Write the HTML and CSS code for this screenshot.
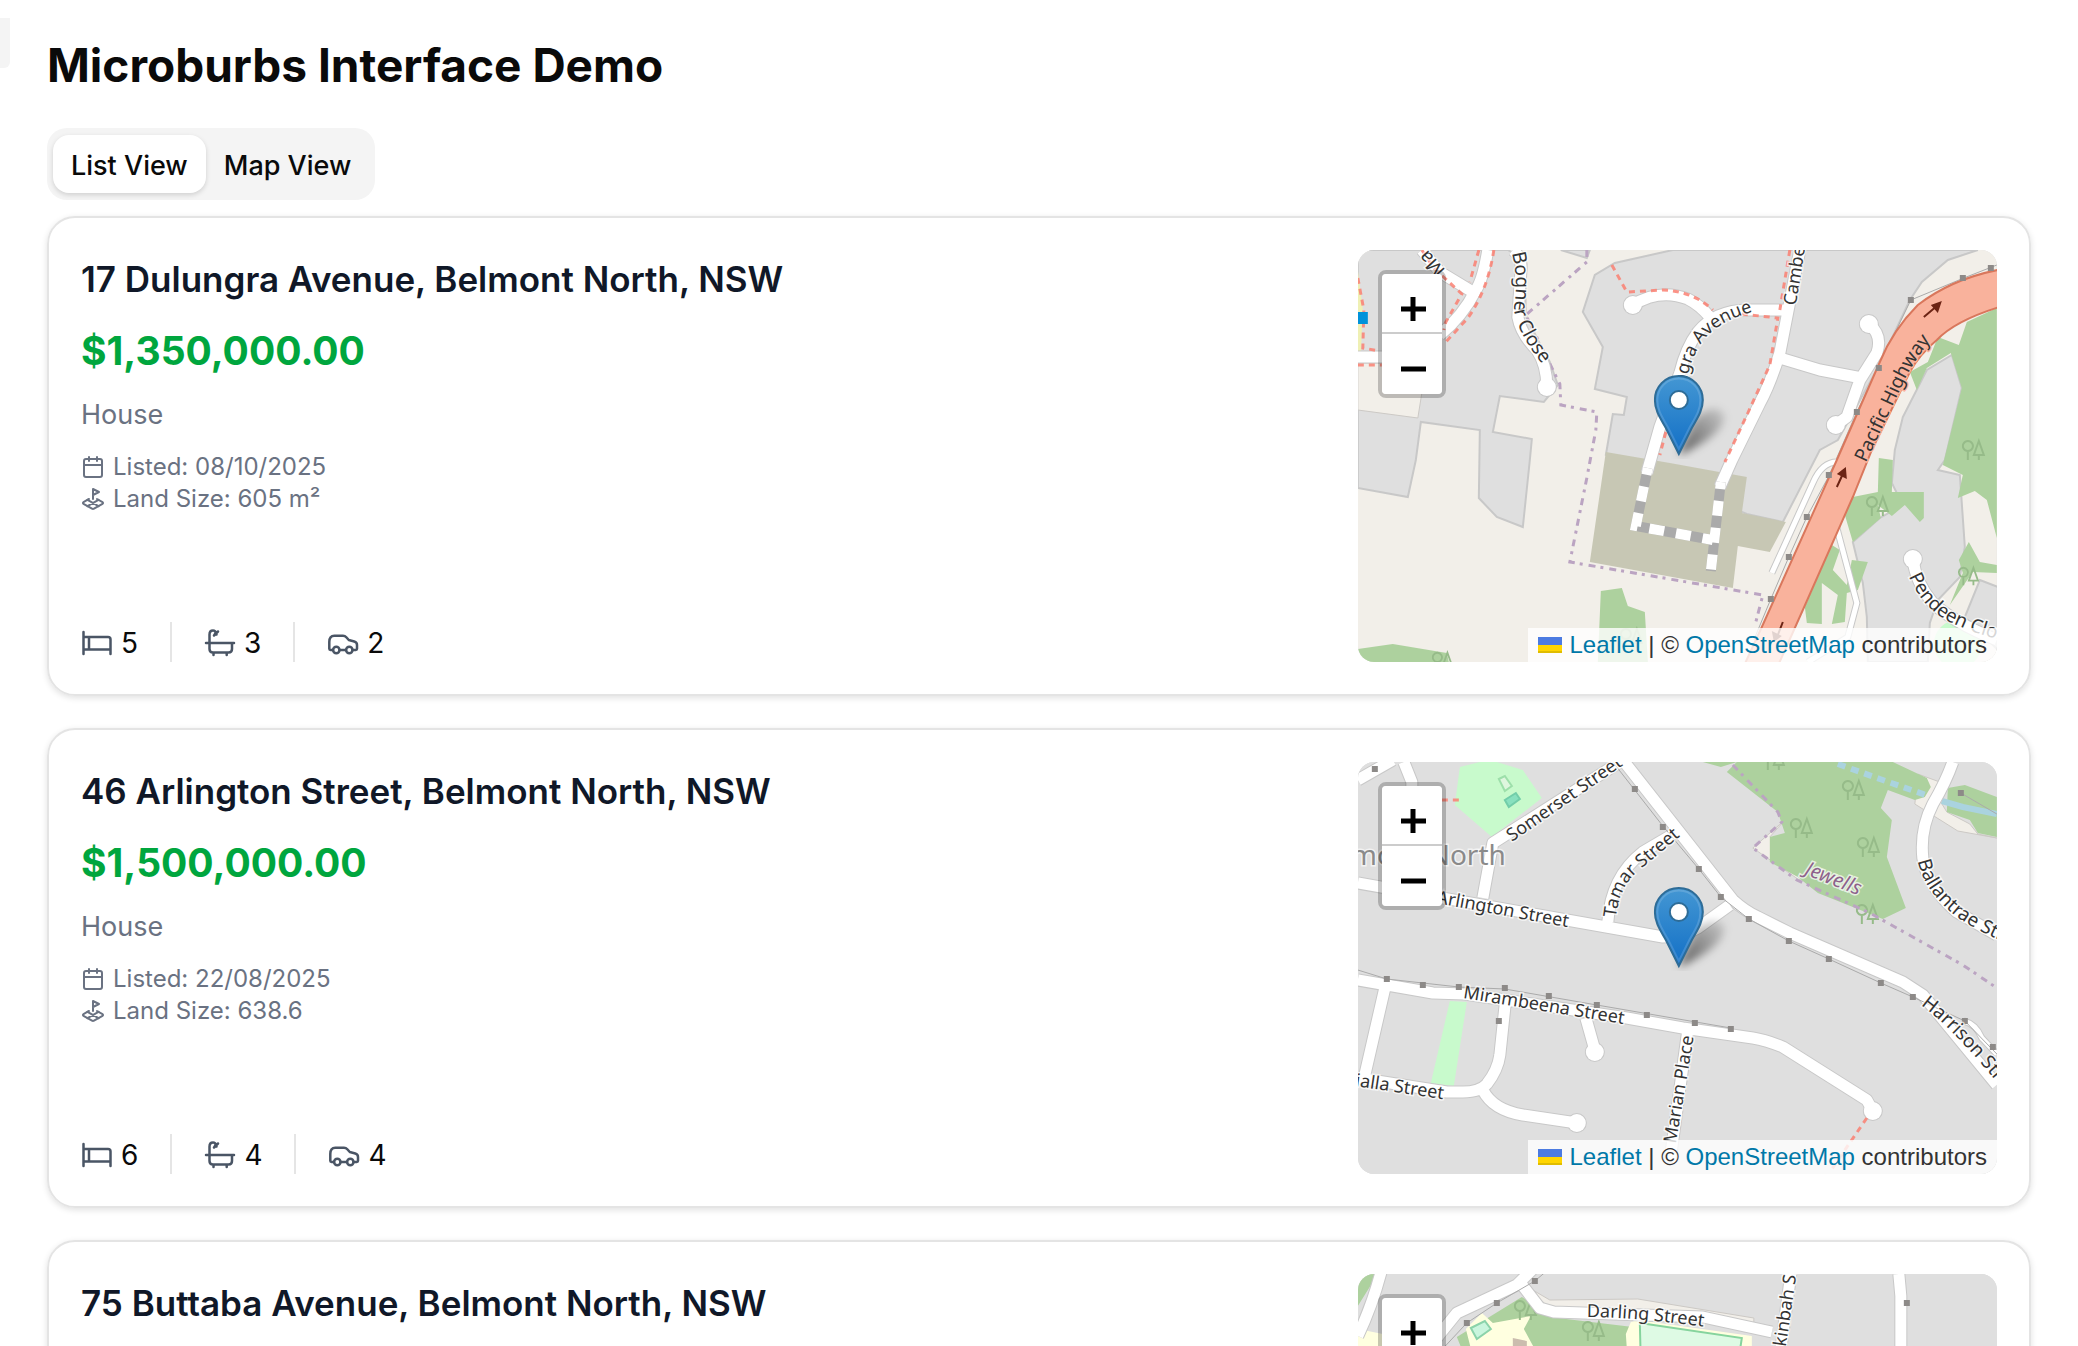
FILE: index.html
```html
<!DOCTYPE html>
<html lang="en">
<head>
<meta charset="utf-8">
<meta name="viewport" content="width=device-width, initial-scale=1">
<title>Microburbs Interface Demo</title>
<link rel="stylesheet" href="styles.css">
</head>
<body>
<svg class="sprite" aria-hidden="true">
  <symbol id="calendar" viewBox="0 0 24 24"><path d="M8 2v4M16 2v4M3 10h18"/><rect x="3" y="4" width="18" height="18" rx="2"/></symbol>
  <symbol id="land" viewBox="0 0 24 24"><path d="m12 8 6-3-6-3v10"/><path d="m8 11.99-5.5 3.14a1 1 0 0 0 0 1.74l8.5 4.86a2 2 0 0 0 2 0l8.5-4.86a1 1 0 0 0 0-1.74L16 12"/><path d="m6.49 12.85 11.02 6.3M17.51 12.85 6.5 19.15"/></symbol>
  <symbol id="bed" viewBox="0 0 32 32"><path d="M2.5 5v22M2.5 10H27q2.500 0 2.500 2.500V27M2.500 22.500h27M8 10v12.500"/></symbol>
  <symbol id="bath" viewBox="0 0 32 32"><path d="M2 16h28M5.500 16V7.500Q5.500 3.500 9 3.500q2.500 0 3 2.500M10 8.500l4-4M11 6.500l1.500 1M5.500 16v6q0 3.500 3.500 3.500h15.500q3.500 0 3.500-3.500v-6M9.500 25.500V28M22.700 25.500V28"/></symbol>
  <symbol id="car" viewBox="0 0 32 32"><path d="M6 23H3.500q-1.200 0-1.200-1.200V15q0-6.300 5-6.300H16q2 0 3.300 1.500l2.500 2.800 5.500 1.500q2.700.8 2.700 3.500v3.800q0 1.200-1.200 1.200H25.500M12.500 23H19"/><circle cx="9.300" cy="23" r="3.200"/><circle cx="22.300" cy="23" r="3.200"/></symbol>
  <symbol id="plus" viewBox="0 0 60 60"><path d="M19 35h25M31 23v24"/></symbol>
  <symbol id="minus" viewBox="0 0 60 60"><path d="M19 35h25"/></symbol>
  <symbol id="trees" viewBox="0 0 24 24"><path d="M6 22V12M6 13a5 5 0 1 1 .1 0M17 22v-5M17 3l-5 14h10z"/></symbol>
  <linearGradient id="pin-fill" x1="0" y1="0" x2="0" y2="1"><stop offset="0" stop-color="#4497d3"/><stop offset="1" stop-color="#126fc6"/></linearGradient>
  <linearGradient id="shade" x1="0" y1="1" x2="1" y2="0"><stop offset="0" stop-opacity=".6"/><stop offset="1" stop-opacity=".1"/></linearGradient>
  <filter id="soft" x="-40%" y="-40%" width="180%" height="180%"><feGaussianBlur stdDeviation="4"/></filter>
  <symbol id="pin" viewBox="0 0 96 84">
    <path d="M25 79 40 45Q60 26 70 39Q74 57 28 79z" fill="url(#shade)" filter="url(#soft)"/>
    <path d="M25 1C11 1 1 12 1 25C1 36 7 44 12 53L25 79L38 53C43 44 49 36 49 25C49 12 39 1 25 1z" fill="url(#pin-fill)" stroke="#2e6c97" stroke-width="2"/>
    <path d="M25 3.500C12 3.500 3.500 14 3.500 25C3.500 36 9 43 14 52L25 74L36 52C41 43 46.500 36 46.500 25C46.500 14 38 3.500 25 3.500z" fill="none" stroke="#fff" stroke-opacity=".15" stroke-width="2"/>
    <circle cx="25" cy="25" r="9" fill="#fff" stroke="#2e6c97" stroke-width="2"/>
  </symbol>
</svg>

<span class="edge-tab"></span>
<main class="page">
  <h1 class="page-title">Microburbs Interface Demo</h1>
  <div class="tabs" role="tablist">
    <button class="tab tab-active" type="button" role="tab" aria-selected="true">List View</button>
    <button class="tab" type="button" role="tab" aria-selected="false">Map View</button>
  </div>

  <div class="listings">
    <article class="card">
      <div class="info">
        <h2 class="address">17 Dulungra Avenue, Belmont North, NSW</h2>
        <p class="price">$1,350,000.00</p>
        <p class="kind">House</p>
        <div class="facts">
          <p class="fact"><svg class="icon-small"><use href="#calendar"/></svg>Listed: 08/10/2025</p>
          <p class="fact"><svg class="icon-small"><use href="#land"/></svg>Land Size: 605 m²</p>
        </div>
        <ul class="rooms">
          <li class="room"><svg class="icon"><use href="#bed"/></svg>5</li>
          <li class="room"><svg class="icon"><use href="#bath"/></svg>3</li>
          <li class="room"><svg class="icon"><use href="#car"/></svg>2</li>
        </ul>
      </div>
      <div class="map">
        <svg class="tiles" viewBox="0 0 639 412" preserveAspectRatio="xMidYMid slice">
          <rect class="land" width="639" height="412"/>
          <g class="zone">
            <path d="M0 0H150L167 10L168 65L180 90L192 112L200 135L186 152L142 146L135 182L174 189L172 210L165 277L139 267L121 248L122 180L63 172L58 210L50 247L0 238z"/>
            <path d="M203 0L229 8L232 0z"/>
            <path d="M315 0L257 13L237 25L225 62L245 97L237 139L269 147L266 165L255 164L248 205L389 264L425 272L462 200L480 190L520 118L552 50L564 32L590 10L620 0z"/>
            <path d="M594 105L604 138L587 210L580 220L602 225L607 297L602 327L580 350L572 373L570 412H510L509 367L505 333L495 292L522 268L545 255L534 233L537 200L545 167L569 120z"/>
            <path d="M622 330L640 337V400L607 367z"/>
          </g>
          <path class="land edge" d="M0 113H25L64 143L60 168L0 160z"/>
          <path fill="#eff0b4" d="M0 20L5 60L3 104H0z"/>
          <path class="olive" d="M248 202L232 312L375 338L380 296L412 302L428 272L384 263L389 227L312 213z"/>
          <g class="wood">
            <path d="M639 58L609 72L601 95L580 87L570 112L552 122L559 140L569 118L593 103L604 138L585 215L605 225L600 248L617 241L629 250L639 288z"/>
            <path d="M521 208L535 210L534 242H566V268L562 272L547 255L534 266L520 255L523 268L495 292L487 265L495 247L520 242z"/>
            <path d="M474 295L482 300L475 320L489 335L494 310L510 312L500 340L489 343L487 372L474 374L480 345L464 333V374L449 373L447 357z"/>
            <path d="M611 292L622 312L639 315V323L615 322L592 355L605 323L601 310z"/>
            <path d="M243 341L264 338L270 356L287 362L290 412H240z"/>
            <path d="M0 399L35 394L89 403L91 412H0z"/>
          </g>
          <circle cx="600" cy="394" r="24" fill="#c8facc"/>
          <g class="trees">
            <use href="#trees" x="508" y="244" width="24" height="24"/><use href="#trees" x="604" y="188" width="24" height="24"/><use href="#trees" x="600" y="315" width="22" height="22"/><use href="#trees" x="74" y="400" width="22" height="22"/><use href="#trees" x="262" y="376" width="24" height="24"/>
          </g>
          <g class="border-line">
            <path d="M229 0V12L168 65L202 134L203 155L239 162L238 180L229 228L212 312L405 345L398 372"/>
          </g>
          <g class="casing">
            <path d="M155 0Q165 8 163 22L160 67Q163 84 179 100Q189 115 189 137M130 0Q125 30 118 40Q105 66 82 85M0 107H30M115 42L82 22L64 0M275 55Q302 38 330 49Q342 55 352 67M427 60H390Q358 60 340 82Q328 98 322 123L302 177L289 223M442 0L422 103Q412 135 402 153L374 210L362 237M422 108L462 120L504 128M511 74Q525 85 519 103L502 130L489 167L478 175M555 309Q558 333 575 353Q595 372 639 390"/>
            <circle cx="189" cy="137" r="10"/><circle cx="275" cy="55" r="10"/><circle cx="511" cy="74" r="10"/><circle cx="478" cy="175" r="10"/><circle cx="555" cy="309" r="10"/>
          </g>
          <g class="road">
            <path d="M155 0Q165 8 163 22L160 67Q163 84 179 100Q189 115 189 137M130 0Q125 30 118 40Q105 66 82 85M0 107H30M115 42L82 22L64 0M275 55Q302 38 330 49Q342 55 352 67M427 60H390Q358 60 340 82Q328 98 322 123L302 177L289 223M442 0L422 103Q412 135 402 153L374 210L362 237M422 108L462 120L504 128M511 74Q525 85 519 103L502 130L489 167L478 175M555 309Q558 333 575 353Q595 372 639 390"/>
            <circle cx="189" cy="137" r="9"/><circle cx="275" cy="55" r="9"/><circle cx="511" cy="74" r="9"/><circle cx="478" cy="175" r="9"/><circle cx="555" cy="309" r="9"/>
          </g>
          <path class="tunnel" d="M290 218L278 276L355 290M363 232L353 321"/>
          <path class="tunnel-dash" d="M290 218L278 276L355 290M363 232L353 321"/>
          <g class="footway">
            <path d="M64 0L76 18L104 44L88 72L86 80M121 0L112 32M136 0Q130 40 110 68L88 92M0 28L6 60L5 98L22 101M0 115H24M254 15L269 42L305 40Q335 41 355 60M432 0L422 60M384 64L420 68L412 115L390 163L367 212M308 182L302 205"/>
          </g>
          <path class="power" d="M639 15L606 28L553 50L520 118L499 162L471 226L449 267L431 307L413 349L396 390"/>
          <path class="lane-casing" d="M414 323L455 233Q464 212 479 212M479 278L499 353L490 387L450 412"/>
          <path class="lane" d="M414 323L455 233Q464 212 479 212M479 278L499 353L490 387L450 412"/>
          <path class="highway" d="M645 19Q595 28 560 55Q535 80 522 112L479 210L404 377L386 416H420L445 360L495 247L514 200L552 122Q562 104 579 90Q598 70 645 56z"/>
          <path class="arrow" d="M566 67L579 56M479 237L485 224M425 372L420 385"/>
          <path class="arrow-head" d="M584 51L573 55L580 63zM488 217L479 224L489 229zM416 392L414 381L424 386z"/>
          <path class="tower" d="M602 25h6v6h-6zM630 15h6v6h-6zM550 47h6v6h-6zM518 115h6v6h-6zM496 159h6v6h-6zM468 222h6v6h-6zM446 264h6v6h-6zM428 304h6v6h-6zM410 346h6v6h-6z"/>
          <rect x="0" y="62" width="10" height="12" fill="#0092da"/>
          <g class="label">
            <path id="m1a" class="guide" d="M154 3Q161 30 156 58Q159 86 196 128"/><text class="label-wide"><textPath href="#m1a">Bogner Close</textPath></text>
            <path id="m1b" class="guide" d="M328 136Q333 99 356 80Q372 67 405 59"/><text><textPath href="#m1b">ngra Avenue</textPath></text>
            <path id="m1c" class="guide" d="M438 56L450 -20"/><text><textPath href="#m1c">Camberley</textPath></text>
            <path id="m1d" class="guide" d="M508 213L545 134Q556 108 590 70"/><text class="label-wide on-highway"><textPath href="#m1d">Pacific Highway</textPath></text>
            <path id="m1e" class="guide" d="M551 326Q564 357 590 371Q615 384 660 394"/><text class="label-wide"><textPath href="#m1e">Pendeen Close</textPath></text>
            <path id="m1f" class="guide" d="M88 20L61 -10"/><text class="label-wide"><textPath href="#m1f">Ma</textPath></text>
          </g>
          <use href="#pin" x="296" y="125" width="96" height="84"/>
        </svg>
        <div class="zoom">
          <button class="zoom-button" type="button" aria-label="Zoom in"><svg class="zoom-icon"><use href="#plus"/></svg></button>
          <button class="zoom-button" type="button" aria-label="Zoom out"><svg class="zoom-icon"><use href="#minus"/></svg></button>
        </div>
        <div class="credit"><a class="credit-link" href="#leaflet"><span class="flag"></span>Leaflet</a> | © <a class="credit-link" href="#osm">OpenStreetMap</a> contributors</div>
      </div>
    </article>

    <article class="card">
      <div class="info">
        <h2 class="address">46 Arlington Street, Belmont North, NSW</h2>
        <p class="price">$1,500,000.00</p>
        <p class="kind">House</p>
        <div class="facts">
          <p class="fact"><svg class="icon-small"><use href="#calendar"/></svg>Listed: 22/08/2025</p>
          <p class="fact"><svg class="icon-small"><use href="#land"/></svg>Land Size: 638.6</p>
        </div>
        <ul class="rooms">
          <li class="room"><svg class="icon"><use href="#bed"/></svg>6</li>
          <li class="room"><svg class="icon"><use href="#bath"/></svg>4</li>
          <li class="room"><svg class="icon"><use href="#car"/></svg>4</li>
        </ul>
      </div>
      <div class="map">
        <svg class="tiles" viewBox="0 0 639 412" preserveAspectRatio="xMidYMid slice">
          <rect class="zone-fill" width="639" height="412"/>
          <path class="land edge" d="M427 58L395 86L440 117L470 125L412 75zM560 12L582 20L578 32L589 50L612 62L620 72L639 76H639L600 69L557 42z"/>
          <g class="wood">
            <path d="M345 0L363 5L379 0L369 10L420 50L427 71L412 75V100L440 115L460 131L525 157L548 146L529 95L534 58L523 46L530 28L557 38L567 35L573 25L569 16L535 0z"/>
            <path d="M590 26L607 23L639 35V75L620 71L612 58L589 50z"/>
          </g>
          <path class="park" d="M102 5L122 0H139L165 8L184 36L134 75L97 43zM92 239L109 240L96 324L73 321z"/>
          <path fill="#def6de" stroke="#9ddfaa" stroke-width="2" d="M141 17L147 14L154 24L147 29z"/>
          <path fill="#88e0be" stroke="#72cda9" stroke-width="2" d="M147 38L158 31L162 37L151 45z"/>
          <g class="trees">
            <use href="#trees" x="484" y="16" width="24" height="24"/><use href="#trees" x="432" y="54" width="24" height="24"/><use href="#trees" x="499" y="73" width="24" height="24"/><use href="#trees" x="498" y="140" width="24" height="24"/><use href="#trees" x="404" y="-14" width="24" height="24"/>
          </g>
          <path class="stream-dash" d="M480 2L522 17L568 33"/><path class="stream" d="M584 39L605 45L639 52"/>
          <path class="border-line" d="M375 3L420 50L424 60L395 86L439 118L512 151L605 203L639 226"/>
          <g class="casing">
            <path d="M0 18L35 -2M46 0L54 20V50M270 -5L135 81L125 136M0 121L209 158L305 175Q325 175 340 166L372 143M250 160Q253 115 285 90L319 70M265 -2L375 138Q387 149 400 155L432 171L545 220L565 233L639 323M0 218L75 231L107 232L269 256L325 266L395 276Q408 278 425 285L509 338L515 349M27 226L7 313M0 316L89 330H105Q122 330 129 322Q140 308 142 293L148 236M125 328Q135 348 165 353L219 361M228 256L237 288M330 268L312 400M595 0Q588 20 575 42Q562 67 565 96Q569 124 599 150L639 173"/>
            <circle cx="515" cy="349" r="10"/><circle cx="219" cy="361" r="10"/><circle cx="237" cy="290" r="10"/>
          </g>
          <g class="road">
            <path d="M0 18L35 -2M46 0L54 20V50M270 -5L135 81L125 136M0 121L209 158L305 175Q325 175 340 166L372 143M250 160Q253 115 285 90L319 70M265 -2L375 138Q387 149 400 155L432 171L545 220L565 233L639 323M0 218L75 231L107 232L269 256L325 266L395 276Q408 278 425 285L509 338L515 349M27 226L7 313M0 316L89 330H105Q122 330 129 322Q140 308 142 293L148 236M125 328Q135 348 165 353L219 361M228 256L237 288M330 268L312 400M595 0Q588 20 575 42Q562 67 565 96Q569 124 599 150L639 173"/>
            <circle cx="515" cy="349" r="9"/><circle cx="219" cy="361" r="9"/><circle cx="237" cy="290" r="9"/>
          </g>
          <path class="lane-casing" d="M606 259Q618 262 624 276L639 292"/><path class="lane" d="M606 259Q618 262 624 276L639 292"/>
          <path class="power" d="M0 208L29 217L101 225L147 227L239 243L373 266M255 0L305 64L341 107L363 135L391 157L431 179L471 197L523 221L555 235L607 259L639 292M603 31L639 52"/>
          <path class="footway" d="M84 38H102M509 356L472 410"/>
          <path class="tower" d="M14 4h6v6h-6zM26 214h6v6h-6zM62 220h6v6h-6zM98 222h6v6h-6zM144 223h6v6h-6zM138 256h6v6h-6zM188 231h6v6h-6zM236 240h6v6h-6zM286 250h6v6h-6zM334 258h6v6h-6zM370 264h6v6h-6zM274 24h6v6h-6zM302 62h6v6h-6zM338 104h6v6h-6zM360 132h6v6h-6zM388 154h6v6h-6zM428 176h6v6h-6zM468 194h6v6h-6zM520 218h6v6h-6zM552 232h6v6h-6zM604 256h6v6h-6zM632 282h6v6h-6zM600 28h6v6h-6z"/>
          <text class="place" x="148" y="103" text-anchor="end">Belmont North</text>
          <g class="label">
            <path id="m2a" class="guide" d="M154 80L290 -14"/><text><textPath href="#m2a">Somerset Street</textPath></text>
            <path id="m2b" class="guide" d="M78 141L230 169"/><text><textPath href="#m2b">Arlington Street</textPath></text>
            <path id="m2c" class="guide" d="M258 156Q261 127 278 111L332 66"/><text><textPath href="#m2c">Tamar Street</textPath></text>
            <path id="m2d" class="guide" d="M105 236L290 266"/><text><textPath href="#m2d">Mirambeena Street</textPath></text>
            <path id="m2e" class="guide" d="M-3 324L130 344"/><text><textPath href="#m2e">ialla Street</textPath></text>
            <path id="m2f" class="guide" d="M318 382L340 250"/><text><textPath href="#m2f">Marian Place</textPath></text>
            <path id="m2g" class="guide" d="M560 99Q566 129 599 155Q620 170 670 190"/><text class="label-wide"><textPath href="#m2g">Ballantrae Street</textPath></text>
            <path id="m2h" class="guide" d="M563 243Q600 270 655 340"/><text class="label-wide"><textPath href="#m2h">Harrison Street</textPath></text>
            <path id="m2i" class="guide" d="M446 112L530 145"/><text class="suburb"><textPath href="#m2i">Jewells</textPath></text>
          </g>
          <use href="#pin" x="296" y="125" width="96" height="84"/>
        </svg>
        <div class="zoom">
          <button class="zoom-button" type="button" aria-label="Zoom in"><svg class="zoom-icon"><use href="#plus"/></svg></button>
          <button class="zoom-button" type="button" aria-label="Zoom out"><svg class="zoom-icon"><use href="#minus"/></svg></button>
        </div>
        <div class="credit"><a class="credit-link" href="#leaflet"><span class="flag"></span>Leaflet</a> | © <a class="credit-link" href="#osm">OpenStreetMap</a> contributors</div>
      </div>
    </article>

    <article class="card">
      <div class="info">
        <h2 class="address">75 Buttaba Avenue, Belmont North, NSW</h2>
      </div>
      <div class="map">
        <svg class="tiles" viewBox="0 0 639 412" preserveAspectRatio="xMidYMid slice">
          <rect class="zone-fill" width="639" height="412"/>
          <path class="land edge" d="M168 12L192 26L280 25L396 44V52L345 43L196 38z"/>
          <path class="wood" d="M0 0H20L0 32zM164 23L99 63L110 90H280L275 53L200 44z"/>
          <path fill="#ffffe0" d="M0 55L25 60V90H0zM124 39L135 49L173 42L166 55L185 90H117L108 55zM273 48L280 46L394 62V90H270L268 60z"/>
          <path fill="#c9f5dd" stroke="#8bd3aa" stroke-width="2" d="M113 54L127 47L133 55L119 65z"/>
          <path fill="#defae4" stroke="#86d49d" stroke-width="2" d="M282 49L384 64L380 90H283z"/>
          <path fill="#cbbdae" d="M155 64L169 67V80H155z"/>
          <g class="trees"><use href="#trees" x="156" y="24" width="24" height="24"/><use href="#trees" x="224" y="45" width="24" height="24"/></g>
          <g class="casing"><path d="M24 -5Q15 30 0 62M175 -5L159 11L99 39L82 60L60 90M162 8L182 34L196 38L345 43L414 58M433 0L421 90M541 0L543 22V90"/></g>
          <g class="road"><path d="M24 -5Q15 30 0 62M175 -5L159 11L99 39L82 60L60 90M162 8L182 34L196 38L345 43L414 58M433 0L421 90M541 0L543 22V90"/></g>
          <path class="power" d="M190 -4L177 7L139 29L109 49L80 80"/>
          <path class="tower" d="M174 4h6v6h-6zM136 26h6v6h-6zM106 46h6v6h-6zM546 26h6v6h-6z"/>
          <g class="label">
            <path id="m3a" class="guide" d="M229 43Q280 43 370 56"/><text><textPath href="#m3a">Darling Street</textPath></text>
            <path id="m3b" class="guide" d="M428 73L443 -30"/><text><textPath href="#m3b">kinbah Street</textPath></text>
          </g>
        </svg>
        <div class="zoom">
          <button class="zoom-button" type="button" aria-label="Zoom in"><svg class="zoom-icon"><use href="#plus"/></svg></button>
          <button class="zoom-button" type="button" aria-label="Zoom out"><svg class="zoom-icon"><use href="#minus"/></svg></button>
        </div>
      </div>
    </article>
  </div>
</main>
</body>
</html>
```
FILE: styles.css
```css
* { box-sizing: border-box; margin: 0; padding: 0; }
html { scrollbar-width: none; }
body { background: #fff; color: #0a0a0a; font-family: Inter, "Liberation Sans", sans-serif; }
button { border: 0; font: inherit; color: inherit; cursor: pointer; }

.sprite { position: absolute; width: 0; height: 0; }
.edge-tab { position: absolute; left: 0; top: 18px; width: 10px; height: 50px; background: #f4f4f4; border-radius: 0 0 6px 0; }

.page { padding: 32px 47px; }
.page-title { font-size: 46px; line-height: 66px; font-weight: 700; margin-bottom: 30px; }

.tabs { display: inline-flex; height: 72px; padding: 7px 6px; background: #f4f4f4; border-radius: 20px; margin-bottom: 16px; vertical-align: top; }
.tab { padding: 2px 18px 0; background: transparent; border-radius: 16px; font-size: 27px; font-weight: 500; }
.tab-active { background: #fff; box-shadow: 0 2px 5px rgba(0, 0, 0, .15); }

.listings { display: flex; flex-direction: column; gap: 32px; }
.card { display: flex; min-height: 480px; padding: 32px; border: 2px solid #e4e4e4; border-radius: 28px; box-shadow: 0 2px 6px rgba(0, 0, 0, .12); }
.info { flex: 2 1 0; min-width: 0; display: flex; flex-direction: column; gap: 16px; padding-top: 1px; }
.address { font-size: 35px; line-height: 56px; font-weight: 600; color: #101828; }
.price { font-size: 39px; line-height: 56px; font-weight: 700; color: #00a63e; }
.kind { font-size: 27px; line-height: 40px; color: #6a7282; }
.fact { display: flex; align-items: center; gap: 8px; font-size: 24px; line-height: 32px; color: #6a7282; }
.icon-small { width: 24px; height: 24px; fill: none; stroke: currentColor; stroke-width: 2; stroke-linecap: round; stroke-linejoin: round; }
.rooms { display: flex; gap: 32px; margin-top: auto; list-style: none; }
.room { display: flex; align-items: center; gap: 8px; height: 40px; padding-top: 2px; font-size: 28px; }
.room + .room { border-left: 2px solid #e5e5e5; padding-left: 32px; }
.icon { width: 32px; height: 32px; fill: none; stroke: #4a5565; stroke-width: 2.5; stroke-linecap: round; stroke-linejoin: round; }

.map { flex: 1 1 0; min-width: 0; position: relative; overflow: hidden; border-radius: 16px; background: #ddd; }
.tiles { position: absolute; inset: 0; width: 100%; height: 100%; }
.zoom { position: absolute; left: 20px; top: 20px; width: 68px; border: 4px solid rgba(0, 0, 0, .22); border-radius: 8px; background-clip: padding-box; }
.zoom-button { display: block; width: 60px; height: 60px; background: #fff; border-radius: 0 0 4px 4px; }
.zoom-button:first-child { border-bottom: 2px solid #ccc; border-radius: 4px 4px 0 0; }
.zoom-icon { display: block; width: 60px; height: 60px; fill: none; stroke: #000; stroke-width: 5; }
.credit { position: absolute; right: 0; bottom: 0; padding: 0 10px; background: rgba(255, 255, 255, .8); color: #333; font-family: "Liberation Sans", Arial, sans-serif; font-size: 24px; line-height: 34px; white-space: nowrap; }
.credit-link { color: #0078a8; text-decoration: none; }
.flag { display: inline-block; width: 24px; height: 16px; margin-right: 8px; background: linear-gradient(#4c7be1 50%, #ffd500 50% 88%, #e0bc00 88%); }

.land { fill: #f2efe9; }
.edge { stroke: #ccc9c5; stroke-width: 1; }
.zone { fill: #dfdfdf; stroke: #c8c8c8; stroke-width: 2; }
.zone-fill { fill: #dfdfdf; }
.olive { fill: #c7c7b4; }
.wood { fill: #add19e; }
.park { fill: #c8facc; }
.trees { fill: none; stroke: #96bb89; stroke-width: 2; }
.casing { fill: #c8c8c8; }
.casing path { fill: none; stroke: #c8c8c8; stroke-width: 13; stroke-linejoin: round; }
.road { fill: #fff; }
.road path { fill: none; stroke: #fff; stroke-width: 11; stroke-linejoin: round; }
.lane-casing { fill: none; stroke: #c8c8c8; stroke-width: 7; }
.lane { fill: none; stroke: #fff; stroke-width: 5; }
.tunnel { fill: none; stroke: #aaa; stroke-width: 10; }
.tunnel-dash { fill: none; stroke: #fff; stroke-width: 10; stroke-dasharray: 15 12; stroke-dashoffset: 8; }
.footway { fill: none; stroke: #fa8072; stroke-width: 3; stroke-dasharray: 6 5; stroke-opacity: .85; }
.border-line { fill: none; stroke: #bba4c2; stroke-width: 3; stroke-dasharray: 7 5 3 6; }
.power { fill: none; stroke: #aaa; stroke-width: 1; }
.tower { fill: #8d8a88; }
.highway { fill: #f9b29c; stroke: #d9775c; stroke-width: 2; }
.arrow { fill: none; stroke: #6c2414; stroke-width: 2; }
.arrow-head { fill: #6c2414; }
.stream { fill: none; stroke: #aad3df; stroke-width: 6; }
.stream-dash { fill: none; stroke: #aad3df; stroke-width: 6; stroke-dasharray: 8 6; }
.guide { fill: none; stroke: none; }
.label { font-family: "Noto Sans", sans-serif; font-size: 18px; fill: #333; stroke: rgba(255, 255, 255, .7); stroke-width: 3; paint-order: stroke; }
.label-wide { font-size: 19px; }
.on-highway { stroke: #f9b29c; }
.suburb { font-size: 20px; font-style: italic; fill: #8d618b; }
.place { font-family: "Noto Sans", sans-serif; font-size: 28px; fill: #8a8a8a; stroke: rgba(255, 255, 255, .6); stroke-width: 3; paint-order: stroke; }
```
